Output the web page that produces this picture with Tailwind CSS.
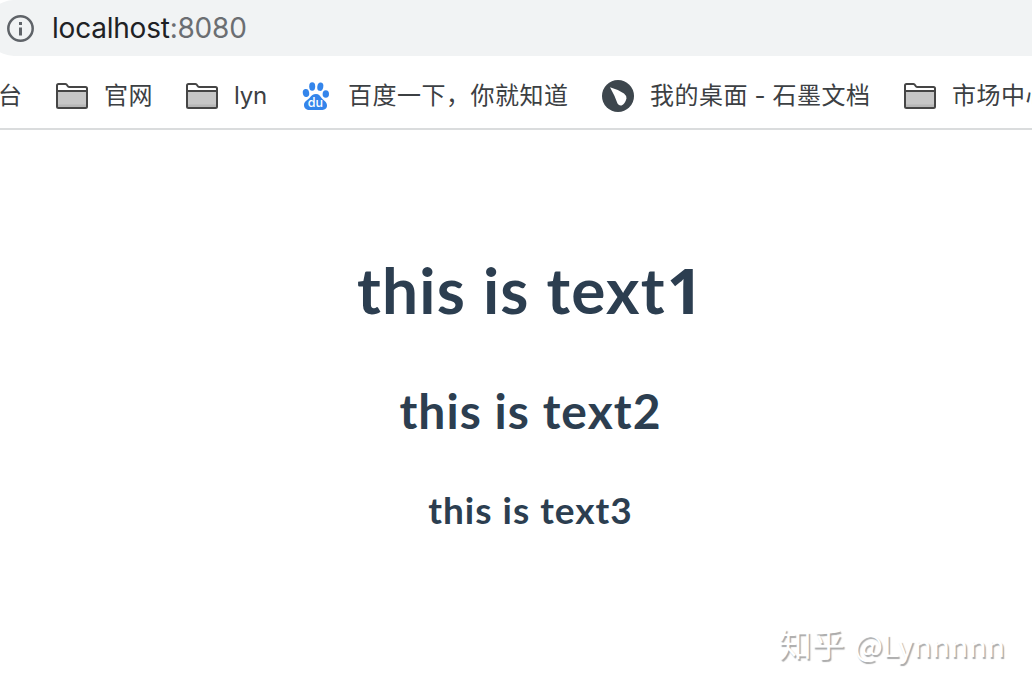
<!DOCTYPE html>
<html lang="zh-CN">
<head>
<meta charset="utf-8">
<title>localhost:8080</title>
<script src="https://cdn.jsdelivr.net/npm/@tailwindcss/browser@4"></script>
</head>
<body class="flex h-screen flex-col overflow-hidden bg-white font-['Noto_Sans_CJK_SC',sans-serif]">
<svg class="hidden">
  <symbol id="folder" viewBox="0 0 32 26">
    <path d="M1 24V2.500Q1 1 2.500 1H10L13 4H29.500Q31 4 31 5.500V23.500Q31 25 29.500 25H2.500Q1 25 1 23.500Z" fill="#fff"/>
    <path d="M1 8H31V24H1Z" fill="#c6c6c6"/>
    <path d="M2 21.500H30V24H2Z" fill="#b7b7b7"/>
    <path d="M1 8H31M1 23.500V2.500Q1 1 2.500 1H9.500Q10.500 1 11 2L12 3.500Q12.400 4 13.500 4H29.500Q31 4 31 5.500V23.500Q31 25 29.500 25H2.500Q1 25 1 23.500Z" fill="none" stroke="#454545" stroke-width="2"/>
  </symbol>
</svg>
<div class="-ml-[14px] flex h-14 shrink-0 items-center rounded-l-[28px] bg-[#f1f3f4] pl-[21px]">
  <svg class="mr-[18px] h-[27px] w-[27px] shrink-0" viewBox="0 0 27 27"><circle cx="13.500" cy="13.500" r="12.200" fill="none" stroke="#5f6368" stroke-width="2.500"/><path d="M12 7h3v3h-3zM12 12.500h3v8h-3z" fill="#5f6368"/></svg>
  <div class="whitespace-nowrap pb-px font-['Inter',sans-serif] text-[28px] leading-8 tracking-[-0.22px] text-[#202124]">localhost<span class="text-[#6b6e72]">:8080</span></div>
</div>
<div class="flex h-[74px] shrink-0 items-center overflow-hidden whitespace-nowrap border-b-2 border-[#dadcdd] pt-2 text-[24px] leading-8 tracking-[0.5px] text-[#3c4043]">
  <span class="-ml-[2px] w-[58px] shrink-0 pb-1">台</span>
  <svg class="mr-4 h-[26px] w-8 shrink-0"><use href="#folder"/></svg>
  <span class="w-[82px] shrink-0 pb-1">官网</span>
  <svg class="mr-4 h-[26px] w-8 shrink-0"><use href="#folder"/></svg>
  <span class="w-[68px] shrink-0 font-['Inter',sans-serif] tracking-[-0.2px]">lyn</span>
  <svg class="mr-[18px] h-[28px] w-7 shrink-0" viewBox="0 0 28 28" fill="#3485eb"><ellipse cx="4" cy="11" rx="3.200" ry="4" transform="rotate(-10 4 11)"/><ellipse cx="10.200" cy="4.500" rx="3" ry="4.200"/><ellipse cx="18.300" cy="4.700" rx="3" ry="4.200" transform="rotate(10 18.300 4.700)"/><ellipse cx="23.800" cy="12" rx="3.200" ry="3.800"/><path d="M14 12C17 12 18 14 20 16.500C22 18.500 25 20 25 23.500C25 27 22 28 19.500 28H7.500C4.500 28 2 26.500 2 23C2 19.500 5.500 18 7.500 16C9.500 13.500 11 12 14 12Z"/><text x="5.800" y="25.400" fill="#fff" font-family="Inter, sans-serif" font-size="12.500" font-weight="500" letter-spacing="0">du</text></svg>
  <span class="w-[254px] shrink-0 pb-1">百度一下，你就知道</span>
  <svg class="mr-4 h-8 w-8 shrink-0" viewBox="0 0 32 32"><circle cx="16" cy="16" r="16" fill="#3d464d"/><path d="M8 7.200Q15 9 22 13.500Q25 16 24.500 18.500Q23 24 19.500 25.500Q17 26 15.500 23.500Q13 16 8 7.200Z" fill="#fff"/></svg>
  <span class="w-[254px] shrink-0 pb-[3px]">我的桌面<span class="mx-[2px] inline-block w-[20.500px] text-center font-['Inter',sans-serif]">-</span>石墨文档</span>
  <svg class="mr-4 h-[26px] w-8 shrink-0"><use href="#folder"/></svg>
  <span class="shrink-0 pb-1">市场中心</span>
</div>
<main class="flex flex-1 flex-col pl-[29px] text-center font-['Lato',sans-serif] font-bold text-[#2c3e50]">
  <h1 class="mt-[120px] h-20 whitespace-nowrap text-[64px] leading-[80px] tracking-[1.2px]">this is text<span class="ml-px font-['Noto_Sans',sans-serif] text-[63px] leading-none">1</span></h1>
  <h2 class="mt-[51px] h-[60px] whitespace-nowrap text-[48px] leading-[60px] tracking-[1.05px]">this is text2</h2>
  <h3 class="mt-[45px] h-12 whitespace-nowrap text-[37px] leading-[48px] tracking-[1px]">this is text3</h3>
  <p class="mt-auto mb-[28px] mr-[27px] text-right font-['Noto_Sans_CJK_SC',sans-serif] text-[30px] font-normal leading-[44px] text-white [text-shadow:1.500px_1.500px_1px_#aaa]"><span class="mr-[3px] text-[33px] leading-none">知乎</span> @Lynnnnn</p>
</main>
</body>
</html>
